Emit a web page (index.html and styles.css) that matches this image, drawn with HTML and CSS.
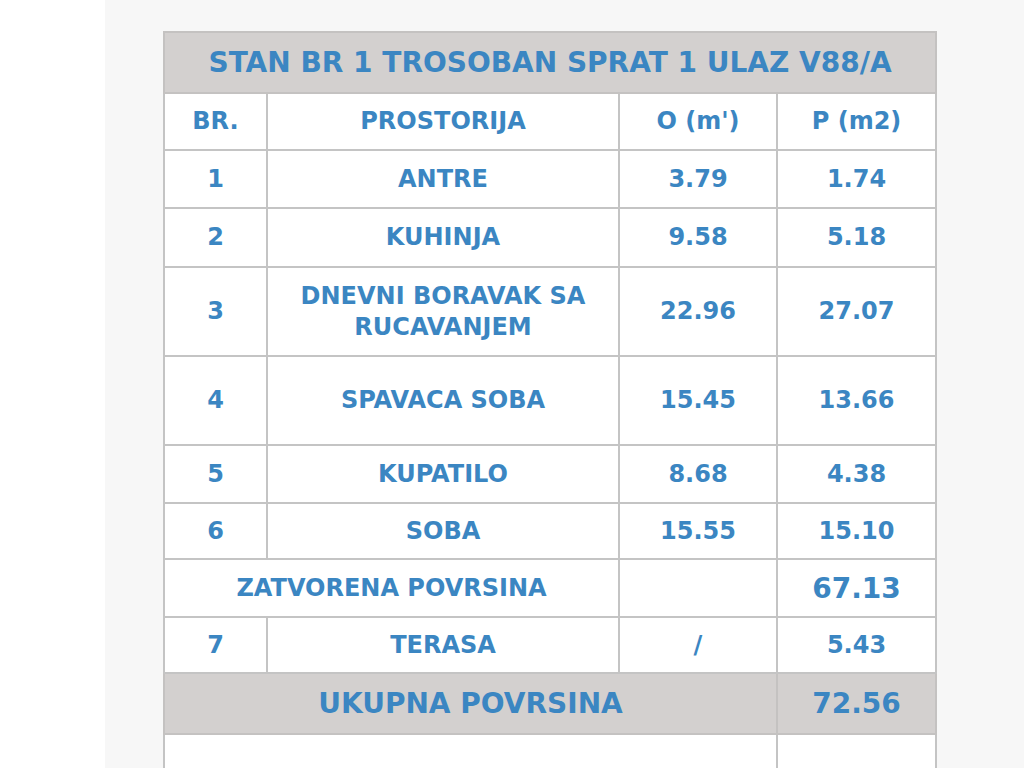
FILE: index.html
```html
<!DOCTYPE html>
<html lang="sr">
<head>
<meta charset="utf-8">
<title>Stan br 1</title>
<link rel="stylesheet" href="styles.css">
</head>
<body>
<div class="page">
  <div class="margin"></div>
  <div class="sheet">
    <table class="rooms">
      <colgroup>
        <col class="c-no"><col class="c-name"><col class="c-o"><col class="c-p">
      </colgroup>
      <tr class="r-title"><th colspan="4">STAN BR 1 TROSOBAN SPRAT 1 ULAZ V88/A</th></tr>
      <tr class="r-head"><td>BR.</td><td>PROSTORIJA</td><td>O (m')</td><td>P (m2)</td></tr>
      <tr class="r-1"><td>1</td><td>ANTRE</td><td>3.79</td><td>1.74</td></tr>
      <tr class="r-2"><td>2</td><td>KUHINJA</td><td>9.58</td><td>5.18</td></tr>
      <tr class="r-3"><td>3</td><td>DNEVNI BORAVAK SA<br>RUCAVANJEM</td><td>22.96</td><td>27.07</td></tr>
      <tr class="r-4"><td>4</td><td>SPAVACA SOBA</td><td>15.45</td><td>13.66</td></tr>
      <tr class="r-5"><td>5</td><td>KUPATILO</td><td>8.68</td><td>4.38</td></tr>
      <tr class="r-6"><td>6</td><td>SOBA</td><td>15.55</td><td>15.10</td></tr>
      <tr class="r-sub"><td colspan="2">ZATVORENA POVRSINA</td><td></td><td class="big">67.13</td></tr>
      <tr class="r-7"><td>7</td><td>TERASA</td><td>/</td><td>5.43</td></tr>
      <tr class="r-total"><td colspan="3" class="big">UKUPNA POVRSINA</td><td class="big">72.56</td></tr>
      <tr class="r-blank"><td colspan="3"></td><td></td></tr>
    </table>
  </div>
</div>
</body>
</html>
```

FILE: styles.css
```css
html, body {
  margin: 0;
  padding: 0;
  background: #ffffff;
  overflow: hidden;
}

.page {
  display: flex;
  width: 1024px;
  height: 768px;
  overflow: hidden;
}

.margin {
  width: 105px;
  flex: none;
  background: #ffffff;
}

.sheet {
  flex: 1;
  background: #f7f7f7;
  padding: 31px 0 0 58px;
}

.rooms {
  border-collapse: collapse;
  table-layout: fixed;
  width: 772px;
  background: #ffffff;
  font-family: "DejaVu Sans", Verdana, sans-serif;
  font-weight: bold;
  color: #3b86c2;
  text-align: center;
}

.c-no { width: 103px; }
.c-name { width: 352px; }
.c-o { width: 158px; }
.c-p { width: 159px; }

.rooms th,
.rooms td {
  border: 2px solid #c4c4c4;
  padding: 0;
  font-size: 24px;
  line-height: 31px;
  vertical-align: middle;
}

.r-title th {
  background: #d3d0cf;
  font-size: 28px;
  font-weight: bold;
  border-color: #c4c2c1;
}

.r-title { height: 61px; }
.r-head { height: 57px; }
.r-1 { height: 58px; }
.r-2 { height: 59px; }
.r-3 { height: 89px; }
.r-4 { height: 89px; }
.r-5 { height: 58px; }
.r-6 { height: 56px; }
.r-sub { height: 58px; }
.r-7 { height: 56px; }
.r-total { height: 61px; }
.r-blank { height: 60px; }

.rooms td.big {
  font-size: 28px;
}

.r-total td {
  background: #d3d0cf;
  border-color: #c4c2c1;
}
```
